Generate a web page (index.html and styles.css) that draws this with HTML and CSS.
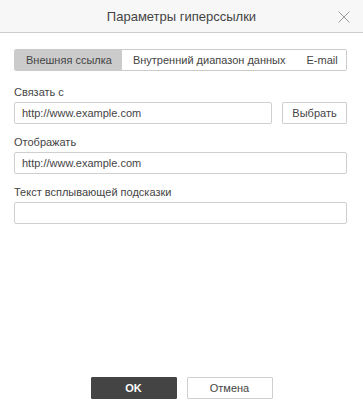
FILE: index.html
```html
<!DOCTYPE html>
<html lang="ru">
<head>
    <meta charset="UTF-8">
    <meta name="viewport" content="width=device-width, initial-scale=1.0">
    <title>Параметры гиперссылки</title>
    <link rel="stylesheet" href="styles.css">
</head>
<body>
    <div class="dialog">
        <div class="header">
            <span class="title">Параметры гиперссылки</span>
            <button class="close" title="Закрыть">
                <svg width="12" height="12" viewBox="0 0 12 12">
                    <path d="M0.5 0.5 L11.5 11.5 M11.5 0.5 L0.5 11.5" stroke="#9a9a9a" stroke-width="1" fill="none"/>
                </svg>
            </button>
        </div>

        <div class="content">
            <div class="tabs">
                <button class="tab active">Внешняя ссылка</button>
                <button class="tab">Внутренний диапазон данных</button>
                <button class="tab last">E-mail</button>
            </div>

            <div class="group first">
                <label class="label">Связать с</label>
                <div class="row">
                    <input class="field" type="text" value="http://www.example.com">
                    <button class="btn select">Выбрать</button>
                </div>
            </div>

            <div class="group">
                <label class="label">Отображать</label>
                <input class="field" type="text" value="http://www.example.com">
            </div>

            <div class="group">
                <label class="label">Текст всплывающей подсказки</label>
                <input class="field" type="text" value="">
            </div>
        </div>

        <div class="footer">
            <button class="btn primary">OK</button>
            <button class="btn">Отмена</button>
        </div>
    </div>
</body>
</html>
```

FILE: styles.css
```css
* {
    box-sizing: border-box;
}
body {
    margin: 0;
    font-family: 'Liberation Sans', Arial, sans-serif;
    font-size: 11px;
    color: #444;
    background-color: #fff;
}
.dialog {
    display: flex;
    flex-direction: column;
    height: 100vh;
}
.header {
    position: relative;
    height: 33px;
    background-color: #f7f7f7;
    border-bottom: 1px solid #cbcbcb;
    display: flex;
    align-items: center;
    justify-content: center;
}
.title {
    font-size: 13px;
    color: #444;
}
.close {
    position: absolute; /* крестик поверх заголовка */
    right: 12px;
    top: 10px;
    width: 14px;
    height: 14px;
    padding: 1px;
    border: none;
    background: none;
    cursor: pointer;
    display: flex;
}
.content {
    flex: 1;
    padding: 16px 16px 0 14px;
}
.tabs {
    display: flex;
    height: 22px;
    border: 1px solid #cbcbcb;
    border-radius: 2px;
    overflow: hidden;
}
.tab {
    border: none;
    background-color: #fff;
    font-family: inherit;
    font-size: 11px;
    color: #444;
    padding: 0 10px 0 11px;
    cursor: pointer;
    white-space: nowrap;
}
.tab.active {
    background-color: #cbcbcb;
}
.tab.last {
    flex: 1;
}
.group {
    margin-top: 10px;
}
.group.first {
    margin-top: 13px;
}
.label {
    display: block;
    line-height: 16px;
    margin-bottom: 2px;
}
.row {
    display: flex;
    gap: 10px;
}
.field {
    display: block;
    width: 100%;
    height: 22px;
    border: 1px solid #cfcfcf;
    border-radius: 2px;
    padding: 0 7px;
    font-family: inherit;
    font-size: 11px;
    color: #444;
    outline: none;
}
.row .field {
    flex: 1;
}
.btn {
    height: 22px;
    width: 86px;
    border: 1px solid #cfcfcf;
    border-radius: 1px;
    background-color: #fff;
    font-family: inherit;
    font-size: 11px;
    color: #444;
    cursor: pointer;
}
.btn.select {
    width: 65px;
    flex: none;
}
.btn.primary {
    background-color: #444;
    border-color: #444;
    color: #fff;
    font-weight: bold;
}
.footer {
    display: flex;
    justify-content: center;
    gap: 10px;
    padding-bottom: 15px;
}
```
